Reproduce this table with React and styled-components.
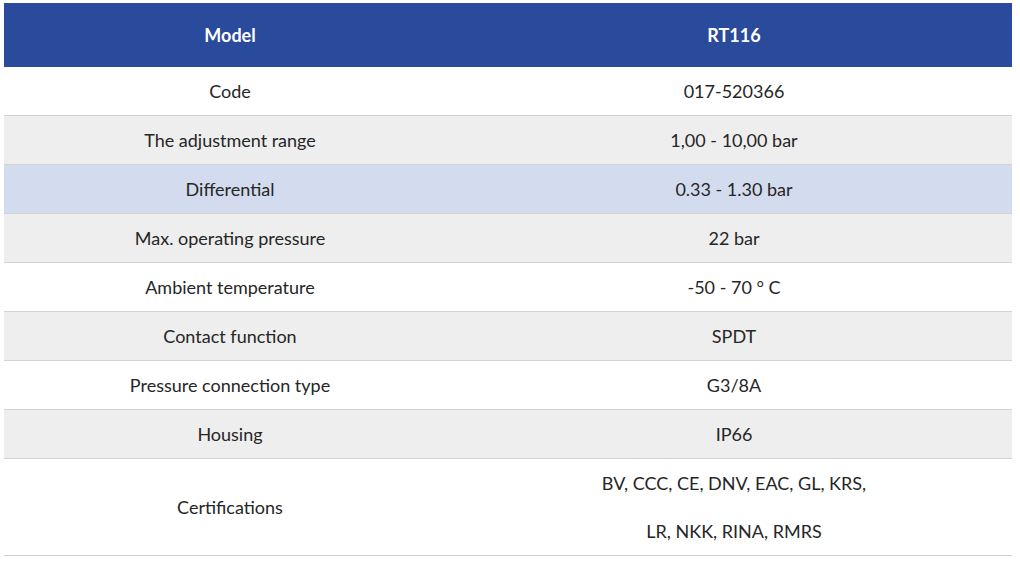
import React from 'react';
import styled, { createGlobalStyle } from 'styled-components';

const rows = [
  { label: 'Code', value: '017-520366' },
  { label: 'The adjustment range', value: '1,00 - 10,00 bar', tone: 'grey' },
  { label: 'Differential', value: '0.33 - 1.30 bar', tone: 'blue' },
  { label: 'Max. operating pressure', value: '22 bar', tone: 'grey' },
  { label: 'Ambient temperature', value: '-50 - 70 ° C' },
  { label: 'Contact function', value: 'SPDT', tone: 'grey' },
  { label: 'Pressure connection type', value: 'G3/8A' },
  { label: 'Housing', value: 'IP66', tone: 'grey' },
  { label: 'Certifications', value: ['BV, CCC, CE, DNV, EAC, GL, KRS,', 'LR, NKK, RINA, RMRS'] },
];

const tones = {
  white: '#ffffff',
  grey: '#eeeeee',
  blue: '#d3dcee',
};

export default function App() {
  return (
    <>
      <Global />
      <Page>
        <Table>
          <thead>
            <tr>
              <Head className="label">Model</Head>
              <Head>RT116</Head>
            </tr>
          </thead>
          <tbody>
            {rows.map(row => (
              <Row key={row.label} $tone={row.tone || 'white'}>
                <Cell className="label">{row.label}</Cell>
                <Cell>
                  {Array.isArray(row.value)
                    ? row.value.map(line => <Line key={line}>{line}</Line>)
                    : row.value}
                </Cell>
              </Row>
            ))}
          </tbody>
        </Table>
      </Page>
    </>
  );
}

const Global = createGlobalStyle`
  html, body {
    margin: 0;
    background: #ffffff;
  }
`;

const Page = styled.div`
  padding: 3px 8px 0 4px;
  font-family: Lato, "Liberation Sans", sans-serif;
`;

const Table = styled.table`
  width: 100%;
  border-collapse: collapse;
  table-layout: fixed;

  .label {
    width: 452px;
  }
`;

const Head = styled.th`
  height: 64px;
  padding: 0;
  background: #2a4a9c;
  color: #ffffff;
  font-size: 18px;
  font-weight: 700;
  text-align: center;
`;

const Row = styled.tr`
  background: ${props => tones[props.$tone]};
  border-bottom: 1px solid #d2d2d2;
`;

const Cell = styled.td`
  padding: 0;
  line-height: 48px;
  font-size: 18px;
  color: #262626;
  text-align: center;
`;

const Line = styled.div`
  line-height: 48px;
`;
